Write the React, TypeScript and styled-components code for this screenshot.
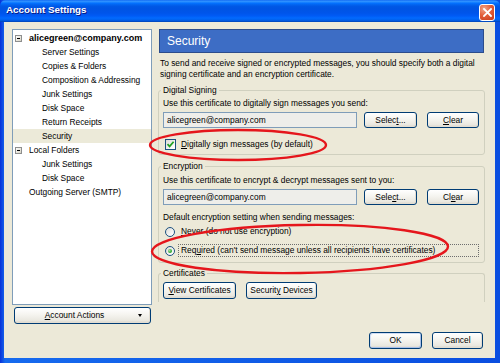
import React from "react";
import styled, { createGlobalStyle } from "styled-components";

const Global = createGlobalStyle`
  html, body { margin: 0; padding: 0; background: #ffffff; }
  body { font-family: "Liberation Sans", Arial, sans-serif; }
  * { box-sizing: border-box; }
`;

const FS = "8.4px";

const Frame = styled.div`
  position: relative;
  width: 500px;
  height: 363px;
  display: flex;
  flex-direction: column;
  background: linear-gradient(90deg, #0831d9 0%, #166aee 1%, #0a4ee0 100%);
  overflow: hidden;
`;

const TitleBar = styled.div`
  height: 22px;
  flex: none;
  display: flex;
  align-items: flex-start;
  padding-left: 6px;
  background: linear-gradient(
    180deg,
    #0058ee 0%,
    #3593ff 4%,
    #288eff 8%,
    #127dff 12%,
    #036ffc 16%,
    #0262ee 22%,
    #0057e5 30%,
    #0054e3 40%,
    #0055eb 60%,
    #005bf5 72%,
    #026afe 82%,
    #0062ef 90%,
    #0052d6 96%,
    #0040ab 100%
  );
  border-radius: 6px 6px 0 0;
`;

const TitleText = styled.div`
  flex: 1;
  padding-top: 4px;
  color: #ffffff;
  font-weight: bold;
  font-size: 9.8px;
  line-height: 12px;
  text-shadow: 1px 1px #0a1883;
`;

const CloseBtn = styled.div`
  width: 16px;
  height: 17px;
  margin-top: 4px;
  margin-right: 5px;
  border: 1px solid #ffffff;
  border-radius: 3px;
  background: radial-gradient(circle at 30% 25%, #f0a58a 0%, #e35f3a 45%, #c5391a 100%);
  display: flex;
  align-items: center;
  justify-content: center;
`;

const Body = styled.div`
  flex: 1;
  margin: 0 5px 5px 4px;
  background: #ece9d8;
  display: flex;
  flex-direction: column;
  padding: 7px 10px 9px 8px;
`;

const Main = styled.div`
  height: 295px;
  display: flex;
  gap: 6px;
`;

const LeftCol = styled.div`
  width: 140px;
  display: flex;
  flex-direction: column;
`;

const Tree = styled.div`
  height: 276px;
  border: 1px solid #7f9db9;
  background: #ffffff;
  padding-top: 1px;
`;

const TreeRow = styled.div<{ $level: number; $selected?: boolean; $bold?: boolean }>`
  height: 14px;
  display: flex;
  align-items: center;
  padding-left: ${(p) => (p.$level === 0 ? 2 : 29)}px;
  background: ${(p) => (p.$selected ? "#ecead9" : "transparent")};
  font-size: ${(p) => (p.$bold ? "9px" : FS)};
  font-weight: ${(p) => (p.$bold ? "bold" : "normal")};
  color: #000000;
  white-space: nowrap;
`;

const Expander = styled.div`
  width: 7px;
  height: 7px;
  border: 1px solid #8e8f8f;
  background: linear-gradient(135deg, #ffffff, #d8d4c4);
  margin-right: 7px;
  display: flex;
  align-items: center;
  justify-content: center;
  &::after {
    content: "";
    width: 3px;
    height: 1px;
    background: #000000;
  }
`;

const NoExpander = styled.div`
  width: 14px;
  flex: none;
`;

const Btn = styled.div<{ $w: number; $h?: number; $default?: boolean }>`
  width: ${(p) => p.$w}px;
  height: ${(p) => p.$h ?? 17}px;
  line-height: ${(p) => (p.$h ?? 17) - 2}px;
  flex: none;
  border: 1px solid #003c74;
  border-radius: 3px;
  background: linear-gradient(180deg, #ffffff 0%, #f5f4ef 45%, #e9e7df 85%, #d6d0c5 100%);
  box-shadow: ${(p) =>
    p.$default ? "inset 1px 1px 0 #cfdcf3, inset -1px -1px 0 #a9c0e8" : "inset -1px -1px 0 #e2ddd2"};
  text-align: center;
  font-size: ${FS};
  color: #000000;
  white-space: nowrap;
`;

const ActionsBtn = styled(Btn)`
  margin: 2px 1px 0 2px;
  display: flex;
  align-items: center;
`;

const ActionsLabel = styled.span`
  flex: 1;
  text-align: center;
`;

const DropArrow = styled.span`
  width: 0;
  height: 0;
  margin-right: 8px;
  margin-left: 4px;
  border-left: 2.5px solid transparent;
  border-right: 2.5px solid transparent;
  border-top: 3px solid #000000;
`;

const RightCol = styled.div`
  width: 327px;
  display: flex;
  flex-direction: column;
`;

const Header = styled.div`
  margin-left: 1px;
  width: 325px;
  height: 24px;
  flex: none;
  border: 1px solid #2b4c8c;
  background: #3d6dc5;
  color: #ffffff;
  font-size: 12px;
  padding-left: 7px;
  display: flex;
  align-items: center;
`;

const Description = styled.div`
  margin-top: 5px;
  padding-left: 2px;
  font-size: ${FS};
  line-height: 11px;
  color: #000000;
`;

const Group = styled.fieldset<{ $mt: number; $pb: number; $open?: boolean }>`
  margin: ${(p) => p.$mt}px 0 0 0;
  padding: 0 5px ${(p) => p.$pb}px 4px;
  border: 1px solid #d0d0bf;
  border-bottom: ${(p) => (p.$open ? "none" : "1px solid #d0d0bf")};
  border-radius: ${(p) => (p.$open ? "3px 3px 0 0" : "3px")};
  min-width: 0;
`;

const Legend = styled.legend`
  padding: 0 2px;
  margin-left: -2px;
  font-size: ${FS};
  line-height: 11px;
  color: #000000;
`;

const Line = styled.div<{ $mt: number }>`
  margin-top: ${(p) => p.$mt}px;
  font-size: ${FS};
  line-height: 11px;
  color: #000000;
  white-space: nowrap;
`;

const CertRow = styled.div<{ $mt: number }>`
  margin-top: ${(p) => p.$mt}px;
  display: flex;
  align-items: center;
`;

const Field = styled.div`
  width: 194px;
  height: 16px;
  margin-right: 7px;
  border: 1px solid #7f9db9;
  background: #eeeeea;
  padding-left: 3px;
  font-size: ${FS};
  line-height: 14px;
  color: #000000;
`;

const ButtonRow = styled.div<{ $mt: number; $gap: number }>`
  margin-top: ${(p) => p.$mt}px;
  display: flex;
  gap: ${(p) => p.$gap}px;
`;

const CheckRow = styled.div<{ $mt: number }>`
  margin-top: ${(p) => p.$mt}px;
  height: 12px;
  display: flex;
  align-items: center;
  padding-left: 2px;
  font-size: ${FS};
  white-space: nowrap;
`;

const CheckBox = styled.div`
  width: 11px;
  height: 11px;
  margin-right: 5px;
  border: 1px solid #1c5180;
  background: linear-gradient(135deg, #dcdcd7 0%, #ffffff 90%);
  display: flex;
  align-items: center;
  justify-content: center;
`;

const RadioRow = styled.div<{ $mt: number }>`
  margin-top: ${(p) => p.$mt}px;
  height: 13px;
  display: flex;
  align-items: center;
  padding-left: 2px;
  font-size: ${FS};
  white-space: nowrap;
`;

const Radio = styled.div<{ $on?: boolean }>`
  width: 10px;
  height: 10px;
  flex: none;
  border-radius: 50%;
  border: 1px solid #1c5180;
  background: linear-gradient(135deg, #dcdcd7 0%, #ffffff 90%);
  margin-right: 3px;
  display: flex;
  align-items: center;
  justify-content: center;
  &::after {
    content: "";
    display: ${(p) => (p.$on ? "block" : "none")};
    width: 4px;
    height: 4px;
    border-radius: 50%;
    background: radial-gradient(circle at 35% 35%, #a6e39c, #21a121 70%);
  }
`;

const RadioLabel = styled.div<{ $focus?: boolean }>`
  flex: 1;
  height: 13px;
  line-height: 11px;
  padding-left: 2px;
  border: 1px dotted ${(p) => (p.$focus ? "#6e6e6e" : "transparent")};
`;

const Footer = styled.div`
  margin-top: 8px;
  margin-right: 2px;
  height: 17px;
  display: flex;
  justify-content: flex-end;
  gap: 10px;
`;

const Overlay = styled.svg`
  position: absolute;
  left: 0;
  top: 0;
  pointer-events: none;
`;

const treeItems: { label: string; level: number; bold?: boolean; exp?: boolean; sel?: boolean }[] = [
  { label: "alicegreen@company.com", level: 0, bold: true, exp: true },
  { label: "Server Settings", level: 1 },
  { label: "Copies & Folders", level: 1 },
  { label: "Composition & Addressing", level: 1 },
  { label: "Junk Settings", level: 1 },
  { label: "Disk Space", level: 1 },
  { label: "Return Receipts", level: 1 },
  { label: "Security", level: 1, sel: true },
  { label: "Local Folders", level: 0, exp: true },
  { label: "Junk Settings", level: 1 },
  { label: "Disk Space", level: 1 },
  { label: "Outgoing Server (SMTP)", level: 0 },
];

export default function App() {
  return (
    <>
      <Global />
      <Frame>
        <TitleBar>
          <TitleText>Account Settings</TitleText>
          <CloseBtn>
            <svg width="9" height="9" viewBox="0 0 9 9">
              <path d="M1 1 L8 8 M8 1 L1 8" stroke="#ffffff" strokeWidth="1.8" strokeLinecap="square" />
            </svg>
          </CloseBtn>
        </TitleBar>
        <Body>
          <Main>
            <LeftCol>
              <Tree>
                {treeItems.map((t, i) => (
                  <TreeRow key={i} $level={t.level} $bold={t.bold} $selected={t.sel}>
                    {t.level === 0 && (t.exp ? <Expander /> : <NoExpander />)}
                    {t.label}
                  </TreeRow>
                ))}
              </Tree>
              <ActionsBtn $w={137}>
                <ActionsLabel>
                  <u>A</u>ccount Actions
                </ActionsLabel>
                <DropArrow />
              </ActionsBtn>
            </LeftCol>
            <RightCol>
              <Header>Security</Header>
              <Description>
                To send and receive signed or encrypted messages, you should specify both a digital
                <br />
                signing certificate and an encryption certificate.
              </Description>

              <Group $mt={5} $pb={4}>
                <Legend>Digital Signing</Legend>
                <Line $mt={2}>Use this certificate to digitally sign messages you send:</Line>
                <CertRow $mt={3}>
                  <Field>alicegreen@company.com</Field>
                  <ButtonRow $mt={0} $gap={10}>
                    <Btn $w={53} $h={16}>
                      Selec<u>t</u>...
                    </Btn>
                    <Btn $w={52} $h={16}>
                      <u>C</u>lear
                    </Btn>
                  </ButtonRow>
                </CertRow>
                <CheckRow $mt={10}>
                  <CheckBox>
                    <svg width="9" height="9" viewBox="0 0 9 9">
                      <path d="M1.5 4.2 L3.6 6.4 L7.6 1.8" fill="none" stroke="#21a121" strokeWidth="1.7" />
                    </svg>
                  </CheckBox>
                  <span>
                    <u>D</u>igitally sign messages (by default)
                  </span>
                </CheckRow>
              </Group>

              <Group $mt={6} $pb={5}>
                <Legend>Encryption</Legend>
                <Line $mt={3}>Use this certificate to encrypt &amp; decrypt messages sent to you:</Line>
                <CertRow $mt={3}>
                  <Field>alicegreen@company.com</Field>
                  <ButtonRow $mt={0} $gap={10}>
                    <Btn $w={53} $h={16}>
                      Sele<u>c</u>t...
                    </Btn>
                    <Btn $w={52} $h={16}>
                      Cl<u>e</u>ar
                    </Btn>
                  </ButtonRow>
                </CertRow>
                <Line $mt={7}>Default encryption setting when sending messages:</Line>
                <RadioRow $mt={2}>
                  <Radio />
                  <RadioLabel>
                    <u>N</u>ever (do not use encryption)
                  </RadioLabel>
                </RadioRow>
                <RadioRow $mt={6}>
                  <Radio $on />
                  <RadioLabel $focus>
                    Req<u>u</u>ired (can't send message unless all recipients have certificates)
                  </RadioLabel>
                </RadioRow>
              </Group>

              <Group $mt={5} $pb={3} $open>
                <Legend>Certificates</Legend>
                <ButtonRow $mt={3} $gap={10}>
                  <Btn $w={73}>
                    <u>V</u>iew Certificates
                  </Btn>
                  <Btn $w={71}>
                    Securit<u>y</u> Devices
                  </Btn>
                </ButtonRow>
              </Group>
            </RightCol>
          </Main>
          <Footer>
            <Btn $w={53} $default>
              OK
            </Btn>
            <Btn $w={51}>Cancel</Btn>
          </Footer>
        </Body>
        <Overlay width="500" height="363" viewBox="0 0 500 363">
          <ellipse cx="238" cy="145" rx="88" ry="15" fill="none" stroke="#e5161c" strokeWidth="2.4" />
          <ellipse
            cx="300"
            cy="249"
            rx="148"
            ry="24"
            fill="none"
            stroke="#e5161c"
            strokeWidth="2.4"
            transform="rotate(-1 300 249)"
          />
        </Overlay>
      </Frame>
    </>
  );
}
